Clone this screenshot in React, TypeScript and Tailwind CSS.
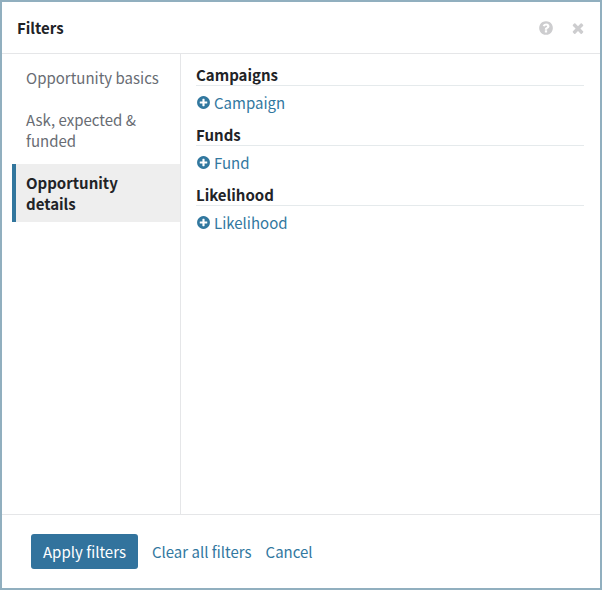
import { useState } from "react";
import clsx from "clsx";

const tabs = [
  { label: "Opportunity basics", groups: [] },
  { label: "Ask, expected & funded", groups: [] },
  {
    label: "Opportunity details",
    groups: [
      { title: "Campaigns", add: "Campaign" },
      { title: "Funds", add: "Fund" },
      { title: "Likelihood", add: "Likelihood" },
    ],
  },
];

function Icon({ path, className }: { path: string; className?: string }) {
  return (
    <svg
      viewBox="0 0 1792 1792"
      fill="currentColor"
      aria-hidden="true"
      className={className}
    >
      <path d={path} />
    </svg>
  );
}

const disc =
  "q0 209-103 385.5t-279.5 279.5-385.5 103-385.5-103-279.5-279.5-103-385.5 103-385.5 279.5-279.5 385.5-103 385.5 103 279.5 279.5 103 385.5z";

const plusPath =
  "M1344 960v-128q0-26-19-45t-45-19h-256v-256q0-26-19-45t-45-19h-128q-26 0-45 19t-19 45v256h-256q-26 0-45 19t-19 45v128q0 26 19 45t45 19h256v256q0 26 19 45t45 19h128q26 0 45-19t19-45v-256h256q26 0 45-19t19-45zm320-64" +
  disc;

const helpPath =
  "M1024 1376v-192q0-14-9-23t-23-9h-192q-14 0-23 9t-9 23v192q0 14 9 23t23 9h192q14 0 23-9t9-23zm256-672q0-88-55.5-163t-138.5-116-170-41q-243 0-371 213-15 24 8 42l132 100q7 6 19 6 16 0 25-12 53-68 86-92 34-24 86-24 48 0 85.5 26t37.5 59q0 38-20 61t-68 45q-63 28-115.5 86.5t-52.5 125.5v36q0 14 9 23t23 9h192q14 0 23-9t9-23q0-19 21.5-49.5t54.5-49.5q32-18 49-28.5t46-35 44.5-48 28-60.5 12.5-81zm384 192" +
  disc;

const closePath =
  "M1490 1322q0 40-28 68l-136 136q-28 28-68 28t-68-28l-294-294-294 294q-28 28-68 28t-68-28l-136-136q-28-28-28-68t28-68l294-294-294-294q-28-28-28-68t28-68l136-136q28-28 68-28t68 28l294 294 294-294q28-28 68-28t68 28l136 136q28 28 28 68t-28 68l-294 294 294 294q28 28 28 68z";

export default function App() {
  const [active, setActive] = useState(2);

  return (
    <div className="min-h-screen flex flex-col border-2 border-[#91afbf] bg-white text-[15px] leading-[21px] text-[#212327] font-['Noto_Sans_CJK_SC',sans-serif]">
      <header className="flex items-center justify-between border-b border-[#e5e6e8] py-[15px] pl-[15px] pr-3.5">
        <h1 className="font-bold">Filters</h1>
        <div className="flex items-center gap-4 text-[#cdcdcf]">
          <button type="button" aria-label="Help">
            <Icon path={helpPath} className="size-4" />
          </button>
          <button type="button" aria-label="Close">
            <Icon path={closePath} className="size-4" />
          </button>
        </div>
      </header>

      <div className="flex grow">
        <nav className="flex w-[179px] shrink-0 flex-col gap-[5px] border-r border-[#e5e6e8] pt-[5px] pl-2.5">
          {tabs.map((tab, i) => (
            <button
              key={tab.label}
              type="button"
              onClick={() => setActive(i)}
              className={clsx(
                "border-l-4 py-2 pl-2.5 pr-3 text-left",
                i === active
                  ? "border-[#32769d] bg-[#eeeeee] font-bold"
                  : "border-transparent text-[#686c73]"
              )}
            >
              {tab.label}
            </button>
          ))}
        </nav>

        <main className="flex grow flex-col gap-[11px] pt-2.5 pl-[15px] pr-4">
          {tabs[active].groups.map((group) => (
            <section key={group.title}>
              <h2 className="border-b border-[#e5eaec] font-bold">
                {group.title}
              </h2>
              <button
                type="button"
                className="mt-1.5 flex items-center gap-[3px] text-[#32789f]"
              >
                <Icon path={plusPath} className="size-[15px]" />
                {group.add}
              </button>
            </section>
          ))}
        </main>
      </div>

      <footer className="flex items-center gap-3.5 border-t border-[#e5e6e8] py-[19px] pl-[29px]">
        <button
          type="button"
          className="rounded-[3px] bg-[#32739d] px-3 py-[7px] text-white"
        >
          Apply filters
        </button>
        <button type="button" className="text-[#32789f]">
          Clear all filters
        </button>
        <button type="button" className="text-[#32789f]">
          Cancel
        </button>
      </footer>
    </div>
  );
}
